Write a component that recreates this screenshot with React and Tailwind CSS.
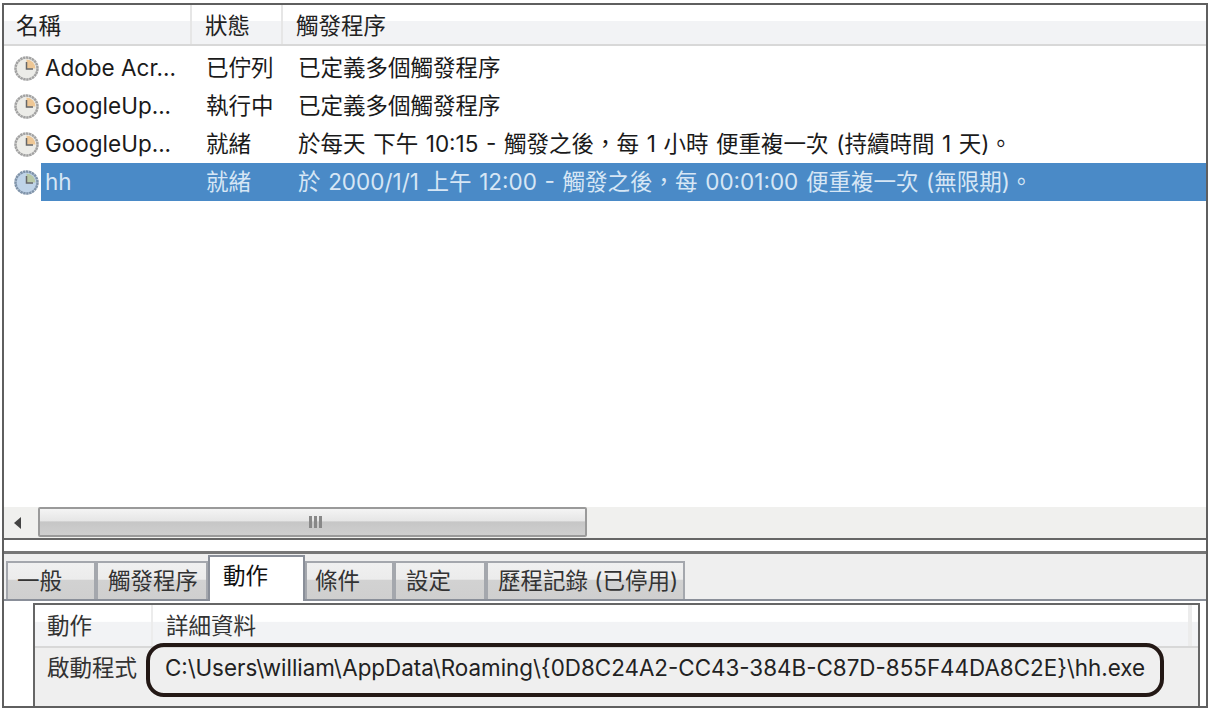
const cjk = "font-['Inter','Noto_Sans_CJK_TC',sans-serif]"

const rows = [
  { name: 'Adobe Acr...', status: '已佇列', trigger: '已定義多個觸發程序' },
  { name: 'GoogleUp...', status: '執行中', trigger: '已定義多個觸發程序' },
  { name: 'GoogleUp...', status: '就緒', trigger: '於每天 下午 10:15 - 觸發之後，每 1 小時 便重複一次 (持續時間 1 天)。' },
  { name: 'hh', status: '就緒', trigger: '於 2000/1/1 上午 12:00 - 觸發之後，每 00:01:00 便重複一次 (無限期)。', selected: true },
]

const tabs = [
  { label: '一般', w: 'w-[90px]', pl: 'pl-[9px]' },
  { label: '觸發程序', w: 'w-[112px]', pl: 'pl-[10px]' },
  { label: '動作', w: 'w-[97px]', pl: 'pl-[13px]', active: true },
  { label: '條件', w: 'w-[89px]', pl: 'pl-[8px]' },
  { label: '設定', w: 'w-[92px]', pl: 'pl-[10px]' },
  { label: '歷程記錄 (已停用)', w: 'w-[199px]', pl: 'pl-[10px]' },
]

function ClockIcon({ selected }) {
  const face = selected ? '#bfd3e8' : '#ecece8'
  const rim = selected ? '#7f93a9' : '#a2a2a2'
  const wedge = selected ? '#b9c9a8' : '#eec795'
  return (
    <svg width="25" height="25" viewBox="0 0 25 25" className="shrink-0">
      <circle cx="12.5" cy="12.5" r="11" fill={face} stroke={rim} strokeWidth="2.5" strokeDasharray="2.5 0.5" />
      <path d="M12.5 12.5V3.5A9 9 0 0 1 21.5 12.5Z" fill={wedge} />
      <path d="M12.5 6V13H19" fill="none" stroke="#666" strokeWidth="1.5" />
    </svg>
  )
}

function TaskRow({ row }) {
  const text = row.selected ? 'text-[#d6e6f5]' : 'text-[#1a1a1a]'
  return (
    <div className="flex h-[38px] items-center pl-[10px]">
      <div className="w-[27px] shrink-0">
        <ClockIcon selected={row.selected} />
      </div>
      <div className={`flex h-full flex-1 items-center ${row.selected ? 'bg-[#4a8ac7]' : ''} ${text}`}>
        <div className="w-[165px] shrink-0 pl-[4px]">{row.name}</div>
        <div className="w-[92px] shrink-0">{row.status}</div>
        <div className="whitespace-nowrap [word-spacing:1.3px]">{row.trigger}</div>
      </div>
    </div>
  )
}

export default function App() {
  return (
    <div className={`h-[711px] w-[1211px] overflow-hidden bg-white pb-[3px] pl-[2px] pr-[3px] pt-[3px] text-[22.5px] leading-none ${cjk}`}>
      <div className="flex h-full flex-col border-2 border-[#5f5f5f]">
        {/* task list header */}
        <div className="flex h-[41px] shrink-0 items-center border-b-2 border-[#d8d8d8] bg-[linear-gradient(180deg,#ffffff_0%,#ffffff_40%,#f2f3f5_42%,#f2f3f5_100%)] pl-[12px] text-[#222]">
          <div className="flex h-full w-[176px] shrink-0 items-center border-r-2 border-[#e6e6e6] pt-[3px]">名稱</div>
          <div className="flex h-full w-[91px] shrink-0 items-center border-r-2 border-[#e6e6e6] pl-[13px] pt-[3px]">狀態</div>
          <div className="pl-[13px] pt-[3px]">觸發程序</div>
        </div>

        {/* rows */}
        <div className="min-h-0 flex-1 pt-[3px]">
          {rows.map((row, i) => (
            <TaskRow key={i} row={row} />
          ))}
        </div>

        {/* horizontal scrollbar */}
        <div className="flex h-[33px] shrink-0 items-center border-b-2 border-[#666] bg-[#f0f0ee] pl-[10px]">
          <div className="h-0 w-0 border-y-[6px] border-r-[7px] border-y-transparent border-r-[#444]" />
          <div className="ml-[17px] flex h-[30px] w-[549px] items-center justify-center self-start rounded-[2px] border-2 border-[#9a9a9a] bg-[linear-gradient(180deg,#f4f4f4_0%,#e6e6e6_45%,#c6c6c6_50%,#cfcfcf_100%)]">
            <div className="flex gap-[2px] pl-[5px]">
              <span className="h-[12px] w-[3px] bg-[#888]" />
              <span className="h-[12px] w-[3px] bg-[#888]" />
              <span className="h-[12px] w-[3px] bg-[#888]" />
            </div>
          </div>
        </div>

        {/* splitter */}
        <div className="h-[14px] shrink-0 border-b-[3px] border-[#777] bg-white" />

        {/* tab strip */}
        <div className="flex h-[47px] shrink-0 items-end border-b-2 border-[#8a8f99] bg-[#efefef] pl-[2px] text-[#333]">
          {tabs.map((tab) => (
            <div
              key={tab.label}
              className={
                tab.active
                  ? `relative z-10 -mb-[2px] flex h-[46px] ${tab.w} shrink-0 items-start border-x-2 border-t-2 border-[#8a8f99] bg-white ${tab.pl} pt-[8px] text-[#111]`
                  : `flex h-[38px] ${tab.w} shrink-0 items-center border-2 border-b-0 border-[#a4a7ad] bg-[linear-gradient(180deg,#f0f0f0_0%,#ececec_45%,#d2d2d2_48%,#cfcfcf_100%)] ${tab.pl} whitespace-nowrap`
              }
            >
              {tab.label}
            </div>
          ))}
        </div>

        {/* details box */}
        <div className="h-[105px] shrink-0 pl-[29px] pr-[6px] pt-[2px]">
          <div className="relative h-full border-x-2 border-t-2 border-[#666] bg-[#efefef] text-[#333]">
            <div className="flex h-[43px] items-center border-b-2 border-[#d8d8d8] bg-[linear-gradient(180deg,#ffffff_0%,#ffffff_40%,#f2f3f5_42%,#f2f3f5_100%)]">
              <div className="flex h-full w-[118px] items-center border-r-2 border-[#ececec] pl-[12px] pt-[2px]">動作</div>
              <div className="flex-1 pl-[13px] pt-[2px]">詳細資料</div>
              <div className="mr-[6px] h-full w-[4px] bg-[#ececec]" />
            </div>
            <div className="flex h-[40px] items-center">
              <div className="w-[130px] shrink-0 pl-[12px]">啟動程式</div>
              <div className="whitespace-nowrap text-[22.4px] text-[#222]">{'C:\\Users\\william\\AppData\\Roaming\\{0D8C24A2-CC43-384B-C87D-855F44DA8C2E}\\hh.exe'}</div>
            </div>
            {/* callout drawn over the path cell */}
            <div className="absolute left-[111px] top-[38px] h-[54px] w-[1018px] rounded-[18px] border-4 border-[#231815]" />
          </div>
        </div>
      </div>
    </div>
  )
}
